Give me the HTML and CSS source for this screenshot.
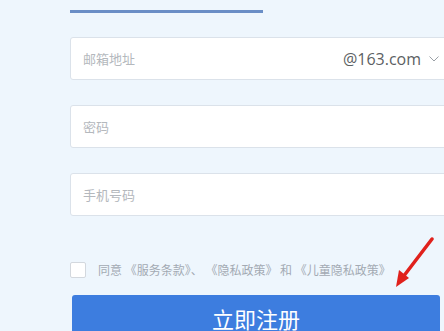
FILE: index.html
```html
<!DOCTYPE html>
<html lang="zh-CN">
<head>
    <meta charset="UTF-8">
    <meta name="viewport" content="width=device-width, initial-scale=1.0">
    <title>注册</title>
    <link rel="stylesheet" href="styles.css">
</head>
<body>

<!-- Register form -->
<div class="form">
    <div class="tab-line"></div>

    <div class="field">
        <span class="placeholder">邮箱地址</span>
        <span class="domain">@163.com</span>
        <span class="chevron">
            <svg width="10" height="6" viewBox="0 0 10 6"><path d="M0.5 0.5 L5 5 L9.5 0.5" fill="none" stroke="#9aa0a6" stroke-width="1"/></svg>
        </span>
    </div>

    <div class="field">
        <span class="placeholder">密码</span>
    </div>

    <div class="field">
        <span class="placeholder">手机号码</span>
    </div>

    <div class="agree">
        <span class="checkbox"></span>
        <span>同意 《服务条款》、 《隐私政策》 和 《儿童隐私政策》</span>
    </div>

    <button class="submit">立即注册</button>
</div>

<!-- Red annotation arrow -->
<svg class="arrow" width="60" height="60" viewBox="0 0 60 60">
    <path d="M58 2 L29 40" stroke="#e0211c" stroke-width="3.5" stroke-linecap="round"/>
    <path d="M22 50 L25 33 L35 41 Z" fill="#e0211c"/>
</svg>

</body>
</html>
```

FILE: styles.css
```css
body {
    margin: 0;
    background-color: #eef6fd;
    font-family: 'Noto Sans CJK SC', 'Noto Sans', sans-serif;
    overflow: hidden;
    height: 331px;
    position: relative;
}

.form {
    margin-left: 70px;
    width: 382px;
    padding-top: 10px;
}

/* Active tab underline */
.tab-line {
    width: 193px;
    height: 3px;
    background-color: #6a8ec6;
    margin-bottom: 24px;
}

/* Input fields */
.field {
    display: flex;
    align-items: center;
    height: 43px;
    box-sizing: border-box;
    border: 1px solid #dbe2ea;
    border-radius: 3px;
    background-color: #ffffff;
    padding: 0 12px;
    margin-bottom: 25px;
}

.placeholder {
    font-size: 13px;
    color: #b4b8bd;
    flex: 1;
}

.domain {
    font-size: 16px;
    color: #5c5f63;
    font-family: 'Open Sans', 'Noto Sans', sans-serif;
}

.chevron {
    margin-left: 8px;
    display: flex;
}

/* Agreement row */
.agree {
    display: flex;
    align-items: center;
    margin-top: 45px;
    font-size: 12px;
    color: #a3aab3;
    white-space: pre;
}

.checkbox {
    width: 14px;
    height: 14px;
    border: 1px solid #d3d8de;
    border-radius: 2px;
    background-color: #ffffff;
    margin-right: 12px;
}

/* Submit button */
.submit {
    display: block;
    width: 368px;
    height: 46px;
    margin-top: 17px;
    margin-left: 2px;
    border: none;
    border-radius: 3px;
    background-color: #3d7ddf;
    color: #ffffff;
    font-size: 22px;
    font-family: 'Noto Sans CJK SC', sans-serif;
}

.arrow {
    position: absolute;
    left: 374px;
    top: 237px;
}
```
